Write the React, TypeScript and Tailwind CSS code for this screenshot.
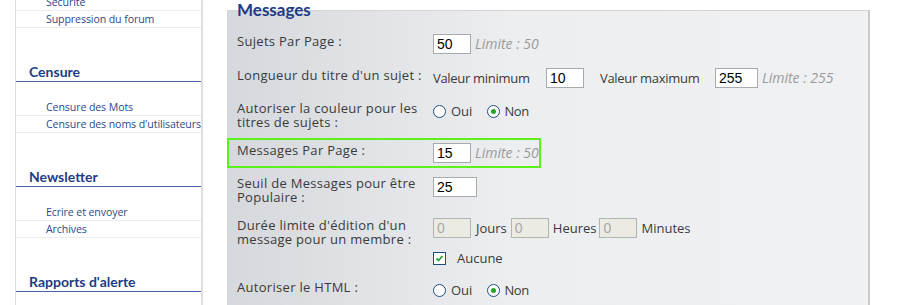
import React from 'react';

const topItems = ['Sécurité', 'Suppression du forum'];

const sections = [
    { title: 'Censure', items: ['Censure des Mots', "Censure des noms d'utilisateurs"] },
    { title: 'Newsletter', items: ['Ecrire et envoyer', 'Archives'] },
    { title: "Rapports d'alerte", items: [] as string[] },
];

function SideItem({ label }: { label: string }) {
    return (
        <div className="h-[17px] border-b border-[#ececec] pl-[30px] text-[10.6px] leading-[16px] tracking-[-0.1px] text-[#2c4a8c] whitespace-nowrap">
            {label}
        </div>
    );
}

function Field({ value, width = 'w-[38px]', disabled = false }: { value: string; width?: string; disabled?: boolean }) {
    return (
        <span
            className={`flex h-[20px] ${width} shrink-0 items-center border pl-[3px] font-['Liberation_Sans'] text-[14px] ${
                disabled ? 'border-[#b4b4b4] bg-[#ebebe4] text-[#a8a8a8]' : 'border-[#a7abb0] bg-white text-black'
            }`}
        >
            {value}
        </span>
    );
}

function Limit({ text }: { text: string }) {
    return <span className="ml-[4px] text-[14px] italic leading-[18px] text-[#9a9a9a]">{text}</span>;
}

function Radio({ checked = false }: { checked?: boolean }) {
    return (
        <span className="flex h-[13px] w-[13px] shrink-0 items-center justify-center rounded-full border border-[#1f4f7e] bg-white">
            {checked && <span className="h-[5px] w-[5px] rounded-full bg-[#27a527]" />}
        </span>
    );
}

function YesNo({ yes }: { yes: boolean }) {
    return (
        <div className="flex h-[20px] items-center">
            <Radio checked={yes} />
            <span className="ml-[5px]">Oui</span>
            <span className="ml-[15px]" />
            <Radio checked={!yes} />
            <span className="ml-[4px] tracking-[-0.4px]">Non</span>
        </div>
    );
}

function Row({ label, className = '', children }: { label: React.ReactNode; className?: string; children: React.ReactNode }) {
    return (
        <div className={`flex items-start ${className}`}>
            <div className="w-[196px] shrink-0 leading-[14px] tracking-[0.3px]">{label}</div>
            <div>{children}</div>
        </div>
    );
}

export default function App() {
    return (
        <div className="flex h-[305px] w-[900px] items-stretch overflow-hidden bg-white font-['Open_Sans',sans-serif] text-[13px] leading-[18px] text-[#3a3a3a]">
            {/* Sidebar */}
            <aside className="ml-[15px] w-[188px] shrink-0 border-l border-r-2 border-[#dedede]">
                <div className="-mt-[6px]">
                    {topItems.map(item => (
                        <SideItem key={item} label={item} />
                    ))}
                </div>
                {sections.map(section => (
                    <div key={section.title} className="mt-[35px]">
                        <div className="h-[19px] border-b border-[#46679f] pl-[13px] font-['Lato'] text-[14px] font-bold leading-[18px] text-[#1d3c85]">
                            {section.title}
                        </div>
                        <div className="pt-[17px]">
                            {section.items.map(item => (
                                <SideItem key={item} label={item} />
                            ))}
                        </div>
                    </div>
                ))}
            </aside>

            {/* Messages panel */}
            <main className="ml-[24px] mt-[10px] w-[643px] shrink-0 border-t border-r-2 border-t-[#d4d4d4] border-r-[#cbcbcb] bg-gradient-to-r from-[#d5d8dc] via-[#edeef0] via-45% to-[#f0f1f3]">
                <h2 className="-mt-[11px] h-[20px] pl-[10px] font-['Lato'] text-[17px] font-bold leading-[20px] text-[#1d3c85]">Messages</h2>

                <div className="pl-[10px]">
                    <Row label="Sujets Par Page :" className="mt-[14px]">
                        <div className="flex items-center">
                            <Field value="50" />
                            <Limit text="Limite : 50" />
                        </div>
                    </Row>

                    <Row label="Longueur du titre d'un sujet :" className="mt-[14px]">
                        <div className="flex items-center">
                            <span className="w-[96px] tracking-[-0.3px] whitespace-nowrap">Valeur minimum</span>
                            <span className="ml-[17px]" />
                            <Field value="10" />
                            <span className="ml-[16px] w-[100px] tracking-[-0.3px] whitespace-nowrap">Valeur maximum</span>
                            <span className="ml-[15px]" />
                            <Field value="255" width="w-[43px]" />
                            <Limit text="Limite : 255" />
                        </div>
                    </Row>

                    <Row
                        label={
                            <>
                                Autoriser la couleur pour les
                                <br />
                                titres de sujets :
                            </>
                        }
                        className="mt-[13px]"
                    >
                        <YesNo yes={false} />
                    </Row>

                    {/* highlighted row */}
                    <div className="-ml-[10px] mt-[9px] w-[314px] border-2 border-[#5cf01c] py-[3px] pl-[8px]">
                        <Row label="Messages Par Page :">
                            <div className="flex items-center">
                                <Field value="15" />
                                <Limit text="Limite : 50" />
                            </div>
                        </Row>
                    </div>

                    <Row
                        label={
                            <>
                                Seuil de Messages pour être
                                <br />
                                Populaire :
                            </>
                        }
                        className="mt-[8px]"
                    >
                        <div className="pt-[1px]">
                            <Field value="25" width="w-[44px]" />
                        </div>
                    </Row>

                    <Row
                        label={
                            <>
                                Durée limite d'édition d'un
                                <br />
                                message pour un membre :
                            </>
                        }
                        className="mt-[14px]"
                    >
                        <div className="flex items-center">
                            <Field value="0" disabled />
                            <span className="ml-[5px] mr-[4px]">Jours</span>
                            <Field value="0" disabled />
                            <span className="ml-[4px] mr-[3px]">Heures</span>
                            <Field value="0" disabled />
                            <span className="ml-[4px]">Minutes</span>
                        </div>
                        <div className="mt-[11px] flex h-[18px] items-center">
                            <span className="flex h-[13px] w-[13px] items-center justify-center border border-[#1f4f7e] bg-white">
                                <svg viewBox="0 0 9 9" className="h-[9px] w-[9px]">
                                    <path d="M1.5 4.5 L3.5 6.5 L7.5 2" fill="none" stroke="#27a527" strokeWidth="1.8" />
                                </svg>
                            </span>
                            <span className="ml-[11px]">Aucune</span>
                        </div>
                    </Row>

                    <Row label="Autoriser le HTML :" className="mt-[13px]">
                        <YesNo yes={false} />
                    </Row>
                </div>
            </main>
        </div>
    );
}
